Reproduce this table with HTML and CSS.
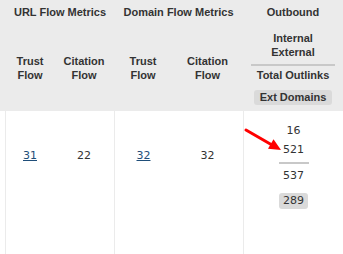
FILE: index.html
```html
<!DOCTYPE html>
<html>
<head>
<meta charset="utf-8">
<link rel="stylesheet" href="styles.css">
</head>
<body>
<div class="wrap">
<table class="metrics">
  <colgroup>
    <col class="c0"><col class="c1"><col class="c2"><col class="c3"><col class="c4"><col class="c5">
  </colgroup>
  <thead>
    <tr class="group">
      <th></th>
      <th colspan="2">URL Flow Metrics</th>
      <th colspan="2">Domain Flow Metrics</th>
      <th>Outbound</th>
    </tr>
    <tr class="sub">
      <th></th>
      <th>Trust<br>Flow</th>
      <th>Citation<br>Flow</th>
      <th>Trust<br>Flow</th>
      <th>Citation<br>Flow</th>
      <th>
        <div class="stack">
          <div>Internal<br>External</div>
          <div class="rule"></div>
          <div>Total Outlinks</div>
          <div class="badge">Ext Domains</div>
        </div>
      </th>
    </tr>
  </thead>
  <tbody>
    <tr>
      <td class="edge"></td>
      <td class="num"><a href="#">31</a></td>
      <td class="num right">22</td>
      <td class="num"><a href="#">32</a></td>
      <td class="num right">32</td>
      <td class="out">
        <div class="v">16</div>
        <div class="v">521</div>
        <div class="rule small"></div>
        <div class="v">537</div>
        <div class="badge num-badge">289</div>
      </td>
    </tr>
  </tbody>
</table>
<svg class="arrow" width="343" height="254" viewBox="0 0 343 254">
  <line x1="246" y1="130" x2="272" y2="145" stroke="#ff0000" stroke-width="3" stroke-linecap="round"/>
  <polygon points="281,150 273.5,139.3 268,148.7" fill="#ff0000"/>
</svg>
</div>
</body>
</html>
```

FILE: styles.css
```css
html, body {
  margin: 0;
  padding: 0;
  background: #ffffff;
  overflow: hidden;
}

.wrap {
  position: relative;
  width: 343px;
  height: 254px;
  overflow: hidden;
}

.metrics {
  table-layout: fixed;
  border-collapse: separate;
  border-spacing: 0;
  width: 343px;
  color: #333333;
}

.c0 { width: 6px; }
.c1 { width: 48px; }
.c2 { width: 60px; }
.c3 { width: 58px; }
.c4 { width: 71px; }
.c5 { width: 100px; }

thead th {
  background: #ebebeb;
  font-family: "Liberation Sans", Arial, sans-serif;
  font-weight: bold;
  font-size: 11px;
  line-height: 14px;
  text-align: center;
  padding: 0;
  color: #333333;
}

.group th {
  height: 24px;
  vertical-align: middle;
}

.sub th {
  height: 87px;
  vertical-align: middle;
}

.stack {
  display: flex;
  flex-direction: column;
  align-items: center;
}

.rule {
  width: 84px;
  height: 2px;
  background: #c8c8c8;
  margin: 5px 0 2px;
}

.badge {
  background: #dadada;
  border-radius: 3px;
  padding: 0 6px;
  margin-top: 8px;
  line-height: 15px;
  height: 15px;
}

tbody td {
  height: 143px;
  vertical-align: top;
  padding: 0;
  border-left: 1px solid #ebebeb;
  font-family: "DejaVu Sans", Verdana, sans-serif;
  font-size: 11px;
  line-height: 19px;
  color: #333333;
  text-align: center;
}

tbody td.edge {
  border-left: none;
  border-right: 1px solid #ebebeb;
}

tbody td:nth-child(2),
tbody td:nth-child(3),
tbody td:nth-child(5) {
  border-left: none;
}

.num {
  padding-top: 35px;
}

.num a {
  color: #1f4e79;
  text-decoration: underline;
}

.out {
  padding-top: 10px;
}

.out .v {
  line-height: 19px;
}

.rule.small {
  width: 30px;
  margin: 3px auto 2px;
}

.num-badge {
  display: inline-block;
  margin-top: 8px;
  padding: 0 4px;
  height: 16px;
  line-height: 16px;
}

.arrow {
  position: absolute;
  left: 0;
  top: 0;
  pointer-events: none;
}
```
